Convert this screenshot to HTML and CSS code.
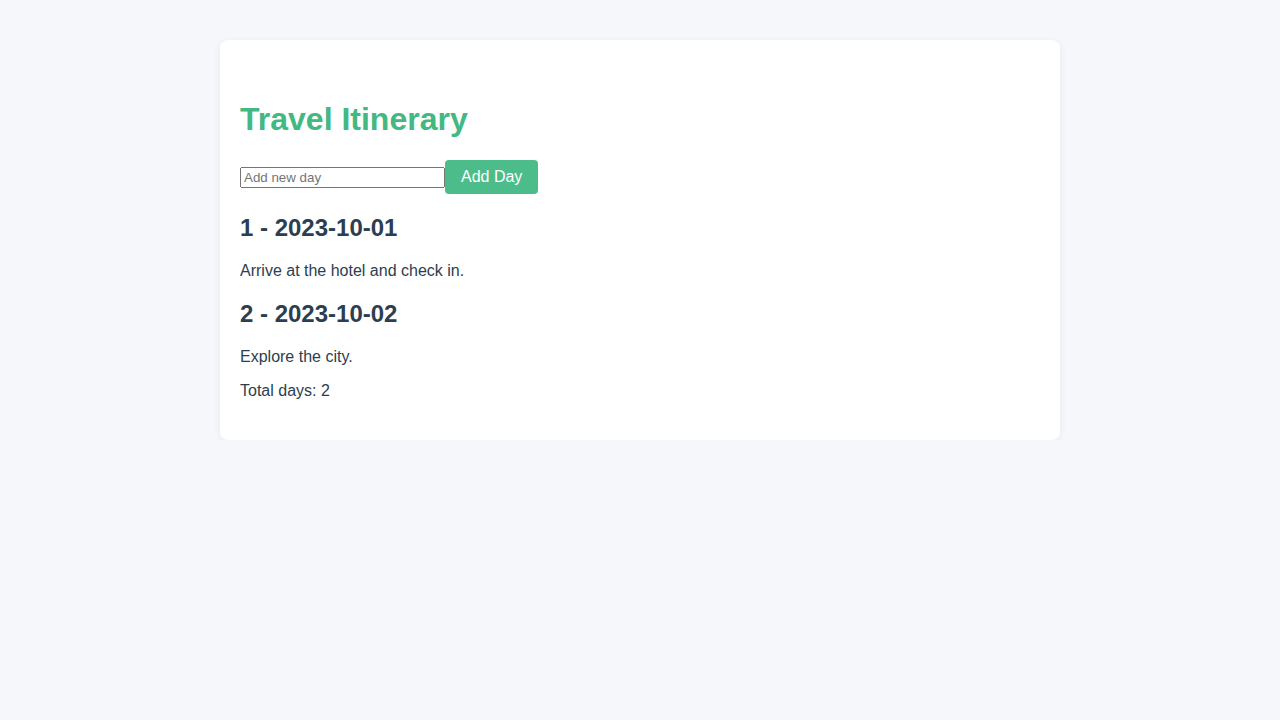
FILE: index.html
```html
<!DOCTYPE html>
<html>
<head>
<meta charset="utf-8">
<link rel="stylesheet" href="styles.css">
</head>
<body>
<div class="card">
  <h1 class="title">Travel Itinerary</h1>
  <div class="add-row">
    <input class="day-input" type="text" placeholder="Add new day"><button class="add-btn">Add Day</button>
  </div>
  <div class="day">
    <h2 class="day-title">1 - 2023-10-01</h2>
    <p class="day-text">Arrive at the hotel and check in.</p>
  </div>
  <div class="day">
    <h2 class="day-title">2 - 2023-10-02</h2>
    <p class="day-text">Explore the city.</p>
  </div>
  <p class="total">Total days: 2</p>
</div>
</body>
</html>
```
FILE: styles.css
```css
html, body {
  margin: 0;
  padding: 0;
}
body {
  background: #f5f7fa;
  font-family: "Liberation Sans", Arial, sans-serif;
  color: #2c3e50;
  padding-top: 40px;
}
.card {
  width: 800px;
  margin: 0 auto;
  background: #ffffff;
  border-radius: 8px;
  box-shadow: 0 2px 8px rgba(0, 0, 0, 0.06);
  padding: 40px 20px 24px;
}
.title {
  color: #42b883;
  font-size: 32px;
  margin: 21.44px 0;
}
.add-row {
  display: block;
}
.day-input {
  box-sizing: border-box;
  width: 205px;
  font-family: "Liberation Sans", Arial, sans-serif;
  font-size: 13.33px;
  vertical-align: baseline;
}
.add-btn {
  background: #4cbd8a;
  color: #ffffff;
  border: none;
  border-radius: 4px;
  padding: 8px 16px;
  font-family: "Liberation Sans", Arial, sans-serif;
  font-size: 16px;
  cursor: pointer;
}
.day-title {
  font-size: 24px;
  margin: 19.92px 0;
}
.day-text, .total {
  font-size: 16px;
  margin: 16px 0;
}
```
